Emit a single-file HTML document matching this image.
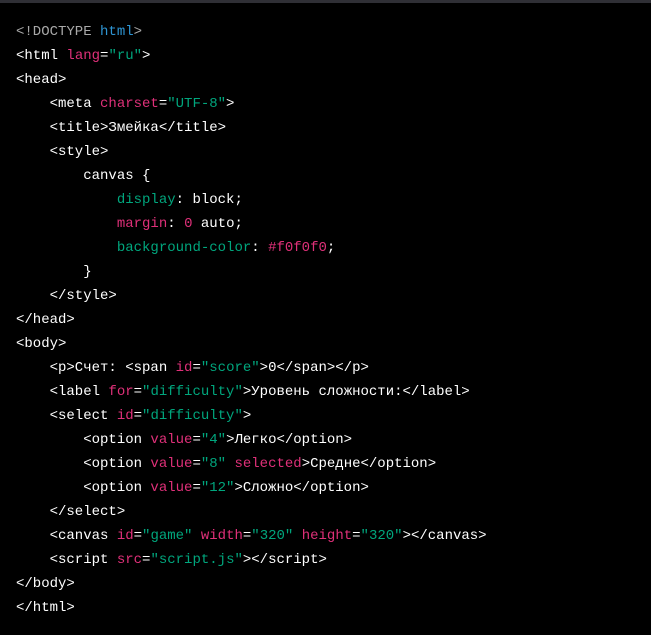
<!DOCTYPE html>
<html><head><meta charset="utf-8"><style>
html,body{margin:0;padding:0;background:#000;width:651px;height:635px;overflow:hidden}
.bar{height:3px;background:#2f2f35}
pre{margin:0;padding:17px 16px 0;font:14px/24px "Liberation Mono","DejaVu Sans Mono",monospace;color:#fff;white-space:pre}
.a{color:#df3079}.s{color:#00a67d}.g{color:#a9a9a9}.b{color:#2e95d3}
</style></head><body><div class="bar"></div><pre><span class="g">&lt;!DOCTYPE</span> <span class="b">html</span><span class="g">&gt;</span>
&lt;html <span class="a">lang</span>=<span class="s">"ru"</span>&gt;
&lt;head&gt;
    &lt;meta <span class="a">charset</span>=<span class="s">"UTF-8"</span>&gt;
    &lt;title&gt;Змейка&lt;/title&gt;
    &lt;style&gt;
        canvas {
            <span class="s">display</span>: block;
            <span class="a">margin</span>: <span class="a">0</span> auto;
            <span class="s">background-color</span>: <span class="a">#f0f0f0</span>;
        }
    &lt;/style&gt;
&lt;/head&gt;
&lt;body&gt;
    &lt;p&gt;Счет: &lt;span <span class="a">id</span>=<span class="s">"score"</span>&gt;0&lt;/span&gt;&lt;/p&gt;
    &lt;label <span class="a">for</span>=<span class="s">"difficulty"</span>&gt;Уровень сложности:&lt;/label&gt;
    &lt;select <span class="a">id</span>=<span class="s">"difficulty"</span>&gt;
        &lt;option <span class="a">value</span>=<span class="s">"4"</span>&gt;Легко&lt;/option&gt;
        &lt;option <span class="a">value</span>=<span class="s">"8"</span> <span class="a">selected</span>&gt;Средне&lt;/option&gt;
        &lt;option <span class="a">value</span>=<span class="s">"12"</span>&gt;Сложно&lt;/option&gt;
    &lt;/select&gt;
    &lt;canvas <span class="a">id</span>=<span class="s">"game"</span> <span class="a">width</span>=<span class="s">"320"</span> <span class="a">height</span>=<span class="s">"320"</span>&gt;&lt;/canvas&gt;
    &lt;script <span class="a">src</span>=<span class="s">"script.js"</span>&gt;&lt;/script&gt;
&lt;/body&gt;
&lt;/html&gt;</pre></body></html>
